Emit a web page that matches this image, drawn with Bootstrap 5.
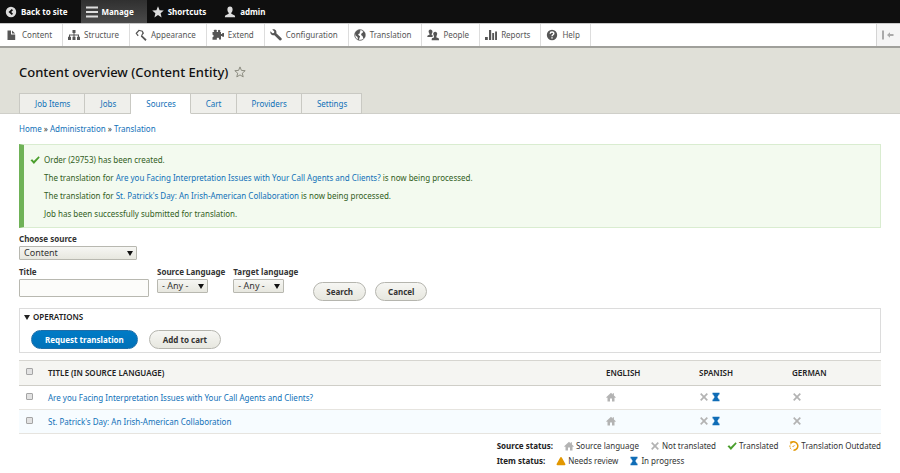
<!DOCTYPE html>
<html lang="en">
<head>
<meta charset="utf-8">
<meta name="viewport" content="width=device-width, initial-scale=1">
<title>Content overview (Content Entity)</title>
<link href="https://cdn.jsdelivr.net/npm/bootstrap@5.3.0/dist/css/bootstrap.min.css" rel="stylesheet">
<style>
body{font-family:"Noto Sans","Open Sans",sans-serif;font-size:8px;line-height:12px;color:#333;background:#fff}
a{color:#1071b8;text-decoration:none}
main a:hover{text-decoration:underline}
svg{display:block;flex:none;fill:currentColor}
.ico{width:12px;height:12px}
.bar-item{display:flex;align-items:center;gap:4px;padding:0 10px 0 5px}
.topbar{background:#0f0f0f;height:23px}
.topbar a{color:#fff;font-weight:700;padding-right:13px}
.topbar .ico{color:#ddd}
.topbar a.open{background:linear-gradient(#303030,#4a4a4a)}
.tray{height:23px;border-top:1px solid #c8c8c8;background:#fff;padding-left:1px}
.tray a{color:#565656;border-right:1px solid #ddd}
.tray button{width:24px;border:0;border-left:1px solid #d4d4d4;background:#f5f5f5;color:#aaa;padding:0 0 0 5px}
.masthead{background:#e0e0d8;border-top:2px solid #a0a09b;border-bottom:1px solid #cfcfc9;padding-top:15px}
.masthead h1{font-size:13px;line-height:18px;font-weight:500;color:#111}
.title-row{gap:6px}
.fav{fill:none;stroke:#8c8c80}
.page-x{padding-left:19px;padding-right:19px}
.tabs{margin:12px 0 -1px}
.tabs a{display:block;height:21px;line-height:20px;padding:0 14px 0 15px;background:#efefeb;border:1px solid #c9c9c3;border-left-width:0}
.tabs li:first-child a{border-left-width:1px}
.tabs a.active{background:#fff;border-bottom-color:#fff}
.crumbs{padding:9px 0}
.notice{background:#f3faef;border:1px solid #d9ecd0;border-left:5px solid #6fb257;color:#325e1c;padding:9px 6px 7px}
.notice p{margin:0 0 6px 14px}
.notice p:last-child{margin-bottom:0}
.notice p.first{margin-left:0;display:flex;gap:2px}
.source-form{margin-top:5px}
.cap{font-weight:700;color:#333;display:block;margin-bottom:1px}
.pick{display:block;appearance:none;height:14px;border:1px solid #b8b8b0;border-radius:1px;font-size:9px;line-height:12px;padding:0 18px 0 4px;color:#333;background:url("data:image/svg+xml,%3Csvg xmlns='http://www.w3.org/2000/svg' viewBox='0 0 6 5'%3E%3Cpath d='M0 0h6L3 5z' fill='%23111'/%3E%3C/svg%3E") no-repeat right 3px center/6px 5px,linear-gradient(#f6f6f3,#e7e7df)}
.pick-wide{width:118px}
.field{display:block;height:18px;width:130px;border:1px solid #b8b8b0;border-radius:1px;background:#fcfcfa;font-size:9px}
.filters{gap:8px;margin-top:6px}
.actions{gap:9px;margin:16px 0 0 7px}
.pill{border:1px solid #b5b5ae;border-radius:10px;height:19px;line-height:16px;padding:0 13px;font-size:8px;font-weight:700;color:#333;background:linear-gradient(#f6f6f3,#e7e7df)}
.actions .pill{padding:0 12px}
.pill-main{background:linear-gradient(#007bc6,#0071b8);border-color:#1e6ea8;color:#fff}
.ops{border:1px solid #dcdcdc;padding:2px 4px 3px;margin-top:7px}
.ops summary{list-style:none;display:flex;align-items:center;gap:3px;font-weight:600;color:#222}
.ops-row{gap:11px;padding:7px 0 0 7px}
.grid{--bs-table-bg:transparent;margin:7px 0 0;line-height:12px;table-layout:fixed}
.grid th,.grid td{padding:0;height:24px;vertical-align:middle;border:0;border-bottom:1px solid #e6e4df}
.grid thead th{height:25px;background:#f5f5f2;border-top:1px solid #d6d5d0;border-bottom:1px solid #cfcec8;color:#222;font-weight:600}
.grid tbody tr:nth-child(2) td{background:#f7fcff}
.grid .c-check{width:29px}
.grid .c-lang{width:93px}
.grid .c-lang:last-child{width:89px}
.grid input{appearance:none;width:7px;height:7px;border:1px solid #a5a5a5;border-radius:1px;background:#e2e2e2;display:block;margin:0 0 3px 7px}
.grid input:checked{background:#1071b8}
.marks{display:flex;gap:2px;color:#b3b3b3;padding-bottom:2px}
.mk{width:10px;height:10px}
.blue{color:#0f6cb6}.gray{color:#b3b3b3}.green{color:#4a9e2c}.orange{color:#e29700}
.legend-box{margin-top:6px}
.legend-line{display:flex;gap:11px;margin-bottom:3px}
.legend-line span{display:flex;align-items:center;gap:2px}
.legend-line b{color:#222}
</style>
</head>
<body>
<svg width="0" height="0" class="position-absolute" aria-hidden="true">
<symbol id="back" viewBox="0 0 12 12"><path fill-rule="evenodd" d="M6 .8a5.200 5.200 0 1 1 0 10.400A5.200 5.200 0 0 1 6 .8zM6.800 3L3.500 6l3.300 3 1.200-1.200L6.200 6 8 4.200z"/></symbol>
<symbol id="menu" viewBox="0 0 12 12"><path d="M0 .5h12v2H0zM0 5h12v2H0zM0 9.500h12v2H0z"/></symbol>
<symbol id="star" viewBox="0 0 12 12"><path d="M6 .3l1.600 3.900 4.200.3-3.200 2.700 1 4.200L6 9.100l-3.600 2.300 1-4.200L.2 4.500l4.200-.3z"/></symbol>
<symbol id="user" viewBox="0 0 12 12"><path d="M6 .5c1.700 0 2.600 1.200 2.600 2.900 0 1.600-.6 2.700-1.300 3.300v1.100l3 1.500c.6.300.8.800.8 1.900H.9c0-1.100.2-1.600.8-1.900l3-1.500V6.700C4 6.100 3.400 5 3.400 3.400 3.400 1.700 4.300.5 6 .5z"/></symbol>
<symbol id="doc" viewBox="0 0 12 12"><path d="M1.500 1.500h3.500v4h4.200V11H1.500zM6 1.500l3.200 3H6z"/></symbol>
<symbol id="tree" viewBox="0 0 12 12"><path d="M4.500 1h3v3h-1v1.500H11v2.200h1V11H9V7.700h1V6.500H6.500v1.200h1V11h-3V7.700h1V6.500H2v1.200h1V11H0V7.700h1V5.500h4.500V4h-1z"/></symbol>
<symbol id="paint" viewBox="0 0 12 12"><path fill-rule="evenodd" d="M.5 4.200L3.700.8l4 .9L9 4.200 7.200 6.400l4.400 4.200-1.200 1.300L5.800 7.600l.8-2L7.400 4 6.700 2.600 4.300 2 2 4.500l1.700 1.700-1 1z"/></symbol>
<symbol id="puzzle" viewBox="0 0 12 12"><path d="M.5 3h1.800l-.8-1.200L2.500.8h1.800L5 1.800 4.500 3h1.700L5.800 1.500 7 .8l1.500.7L8 3h1v2h.9L10.500 4H12v3.800h-1.500L9.900 7H9v3.500H7V9.200l-1-.7-1.200.7v1.600H.5V8.200l1-.4V6l-1-.3z"/></symbol>
<symbol id="wrench" viewBox="0 0 12 12"><path d="M.4 2.200l2.100 2 1.500-.3.300-1.400L2.300.5C4 0 5.600.6 6.200 2c.3.800.3 1.500.1 2.200l5.200 5.100c.9 1.300-.7 2.900-2 2L4.400 6.200c-.8.300-1.600.2-2.300-.2C.7 5.300 0 3.700.4 2.200z"/></symbol>
<symbol id="globe" viewBox="0 0 12 12"><circle cx="6" cy="6" r="5.300" fill="none" stroke="currentColor" stroke-width=".8"/><path d="M1 4.500C1.500 2.500 3 1 5.500.8L6.700 2 5.500 3l.6 1-2 1.200.8 1.300 1.200.8-1.300 3.600H4L3.500 8 1.500 6.500zM8.500 1.300L11 4v4L9.300 9.500 8.500 7 7 6l.8-2 1.300-.5z"/></symbol>
<symbol id="people" viewBox="0 0 12 12"><path d="M3.300.6c1.300 0 2.200.9 2.200 2.300L4.700 5v1l1.200.5-.4 1.500H.3c0-1 .2-1.600.9-1.800L2.500 5.700V5l-.9-2.100C1.600 1.500 2.200.6 3.300.6zM8.200 2.800c1.300 0 2 .9 2 2.300L9.400 7.500v1l1.800.6c.6.300.8 1 .8 2.100H4.700c0-1.100.1-1.800.7-2.100l1.600-.6v-1l-.8-2.400c0-1.400.8-2.300 2-2.300z"/></symbol>
<symbol id="bars" viewBox="0 0 12 12"><path d="M0 8h2.800v3H0zM4 1h2.200v10H4zM7.200 4h1.900v7H7.200zM10.100 2.500H12V11h-1.900z"/></symbol>
<symbol id="help" viewBox="0 0 12 12"><circle cx="6" cy="6" r="5.200"/><path d="M4.200 4.700C4.300 2.400 7.900 2.500 7.800 4.600 7.700 5.800 6 5.800 6 7.200M6 8.200v1.300" fill="none" stroke="#fff" stroke-width="1.400"/></symbol>
<symbol id="collapse" viewBox="0 0 12 12"><path d="M0 1.500h2v9H0zM5 6l3-2.700V5h3.500v2H8v1.700z"/></symbol>
<symbol id="check" viewBox="0 0 10 10"><path d="M.5 5.300l1.700-1.100L3.800 6 8.600 1.300 9.700 2.500 3.900 8.900z"/></symbol>
<symbol id="home" viewBox="0 0 10 10"><path d="M5 .7l1.700 1.700V1.300h1.200v2.200L9.800 5.300l-.7.700-.6-.5V9.500H6V6.500H4v3H1.500v-4L.9 6l-.7-.7z"/></symbol>
<symbol id="cross" viewBox="0 0 10 10"><path d="M1.700 1.700l6.600 6.600M8.300 1.700L1.700 8.300" fill="none" stroke="currentColor" stroke-width="1.700"/></symbol>
<symbol id="glass" viewBox="0 0 10 10"><path d="M1.500.7h7v1.800H7.700C7.500 3.700 6.800 4.400 6.200 5c.6.600 1.300 1.300 1.500 2.500h.8v1.800h-7V7.500h.8C2.500 6.300 3.200 5.600 3.800 5 3.200 4.400 2.500 3.700 2.300 2.500h-.8z"/></symbol>
<symbol id="warn" viewBox="0 0 10 10"><path d="M5 .9c.4 0 .6.200.8.500L9.400 8c.2.700-.1 1.200-.8 1.200H1.400C.7 9.200.4 8.700.6 8l3.600-6.600c.2-.3.400-.5.800-.5z"/></symbol>
<symbol id="stale" viewBox="0 0 10 10"><path d="M2 1.700A4.200 4.200 0 1 1 4.500 9.200" fill="none" stroke="currentColor" stroke-width="1.500"/><path d="M.9 4.600v1.300c.2 1 .8 1.900 1.600 2.500" fill="none" stroke="currentColor" stroke-width="1.100" stroke-dasharray="1.200 .8"/><path d="M.8.500h3.500L1.500 4zM3 5.300l1.200 1 2.500-2.500" opacity=".75"/></symbol>
</svg>

<nav class="topbar d-flex" aria-label="Toolbar">
<a href="#" class="bar-item"><svg class="ico"><use href="#back"/></svg>Back to site</a>
<a href="#" class="bar-item open"><svg class="ico"><use href="#menu"/></svg>Manage</a>
<a href="#" class="bar-item"><svg class="ico"><use href="#star"/></svg>Shortcuts</a>
<a href="#" class="bar-item"><svg class="ico"><use href="#user"/></svg>admin</a>
</nav>
<nav class="tray d-flex" aria-label="Administration">
<a href="#" class="bar-item"><svg class="ico"><use href="#doc"/></svg>Content</a>
<a href="#" class="bar-item"><svg class="ico"><use href="#tree"/></svg>Structure</a>
<a href="#" class="bar-item"><svg class="ico"><use href="#paint"/></svg>Appearance</a>
<a href="#" class="bar-item"><svg class="ico"><use href="#puzzle"/></svg>Extend</a>
<a href="#" class="bar-item"><svg class="ico"><use href="#wrench"/></svg>Configuration</a>
<a href="#" class="bar-item"><svg class="ico"><use href="#globe"/></svg>Translation</a>
<a href="#" class="bar-item"><svg class="ico"><use href="#people"/></svg>People</a>
<a href="#" class="bar-item"><svg class="ico"><use href="#bars"/></svg>Reports</a>
<a href="#" class="bar-item"><svg class="ico"><use href="#help"/></svg>Help</a>
<button type="button" class="ms-auto" aria-label="Vertical orientation"><svg class="ico"><use href="#collapse"/></svg></button>
</nav>

<header class="masthead page-x">
<div class="title-row d-flex align-items-center"><h1 class="m-0">Content overview (Content Entity)</h1>
<svg class="ico fav" viewBox="0 0 12 12"><path d="M6 .9l1.400 3.500 3.800.3-2.900 2.500.9 3.700L6 8.900l-3.200 2 .9-3.700L.8 4.700l3.800-.3z"/></svg></div>
<ul class="tabs list-unstyled d-flex">
<li><a href="#">Job Items</a></li><li><a href="#">Jobs</a></li><li><a href="#" class="active" aria-current="page">Sources</a></li><li><a href="#">Cart</a></li><li><a href="#">Providers</a></li><li><a href="#">Settings</a></li>
</ul>
</header>

<main class="page-x">
<nav class="crumbs" aria-label="Breadcrumb"><a href="#">Home</a> » <a href="#">Administration</a> » <a href="#">Translation</a></nav>
<div class="notice" role="status">
<p class="first"><svg class="ico green" viewBox="0 0 12 12"><use href="#check" x="0" y="1" width="10" height="10"/></svg>Order (29753) has been created.</p>
<p>The translation for <a href="#">Are you Facing Interpretation Issues with Your Call Agents and Clients?</a> is now being processed.</p>
<p>The translation for <a href="#">St. Patrick's Day: An Irish-American Collaboration</a> is now being processed.</p>
<p>Job has been successfully submitted for translation.</p>
</div>

<form class="source-form" onsubmit="return false">
<label class="cap" for="source">Choose source</label>
<select id="source" class="pick pick-wide"><option>Content</option></select>
<div class="filters d-flex flex-wrap align-items-start">
<div><label class="cap" for="title">Title</label><input id="title" type="text" class="field"></div>
<div><label class="cap" for="from">Source Language</label><select id="from" class="pick"><option>- Any -</option></select></div>
<div><label class="cap" for="to">Target language</label><select id="to" class="pick"><option>- Any -</option></select></div>
<div class="actions d-flex"><button class="pill">Search</button><button type="button" class="pill">Cancel</button></div>
</div>
<details class="ops" open>
<summary><svg width="6" height="5" viewBox="0 0 6 5"><path d="M0 0h6L3 5z"/></svg>OPERATIONS</summary>
<div class="ops-row d-flex"><button type="button" class="pill pill-main">Request translation</button><button type="button" class="pill">Add to cart</button></div>
</details>

<table class="table grid">
<thead><tr><th class="c-check"><input type="checkbox" aria-label="Select all rows"></th><th>TITLE (IN SOURCE LANGUAGE)</th><th class="c-lang">ENGLISH</th><th class="c-lang">SPANISH</th><th class="c-lang">GERMAN</th></tr></thead>
<tbody>
<tr><td><input type="checkbox" aria-label="Select Are you Facing Interpretation Issues"></td><td><a href="#">Are you Facing Interpretation Issues with Your Call Agents and Clients?</a></td><td><div class="marks"><svg class="mk"><use href="#home"/></svg></div></td><td><div class="marks"><svg class="mk"><use href="#cross"/></svg><svg class="mk blue"><use href="#glass"/></svg></div></td><td><div class="marks"><svg class="mk"><use href="#cross"/></svg></div></td></tr>
<tr><td><input type="checkbox" aria-label="Select St. Patrick's Day"></td><td><a href="#">St. Patrick's Day: An Irish-American Collaboration</a></td><td><div class="marks"><svg class="mk"><use href="#home"/></svg></div></td><td><div class="marks"><svg class="mk"><use href="#cross"/></svg><svg class="mk blue"><use href="#glass"/></svg></div></td><td><div class="marks"><svg class="mk"><use href="#cross"/></svg></div></td></tr>
</tbody>
</table>
</form>

<div class="legend-box d-flex justify-content-end"><div>
<div class="legend-line"><b>Source status:</b><span><svg class="mk gray"><use href="#home"/></svg>Source language</span><span><svg class="mk gray"><use href="#cross"/></svg>Not translated</span><span><svg class="mk green"><use href="#check"/></svg>Translated</span><span><svg class="mk orange"><use href="#stale"/></svg>Translation Outdated</span></div>
<div class="legend-line"><b>Item status:</b><span><svg class="mk orange"><use href="#warn"/></svg>Needs review</span><span><svg class="mk blue"><use href="#glass"/></svg>In progress</span></div>
</div></div>
</main>
<script src="https://cdn.jsdelivr.net/npm/bootstrap@5.3.0/dist/js/bootstrap.bundle.min.js"></script>
</body>
</html>
